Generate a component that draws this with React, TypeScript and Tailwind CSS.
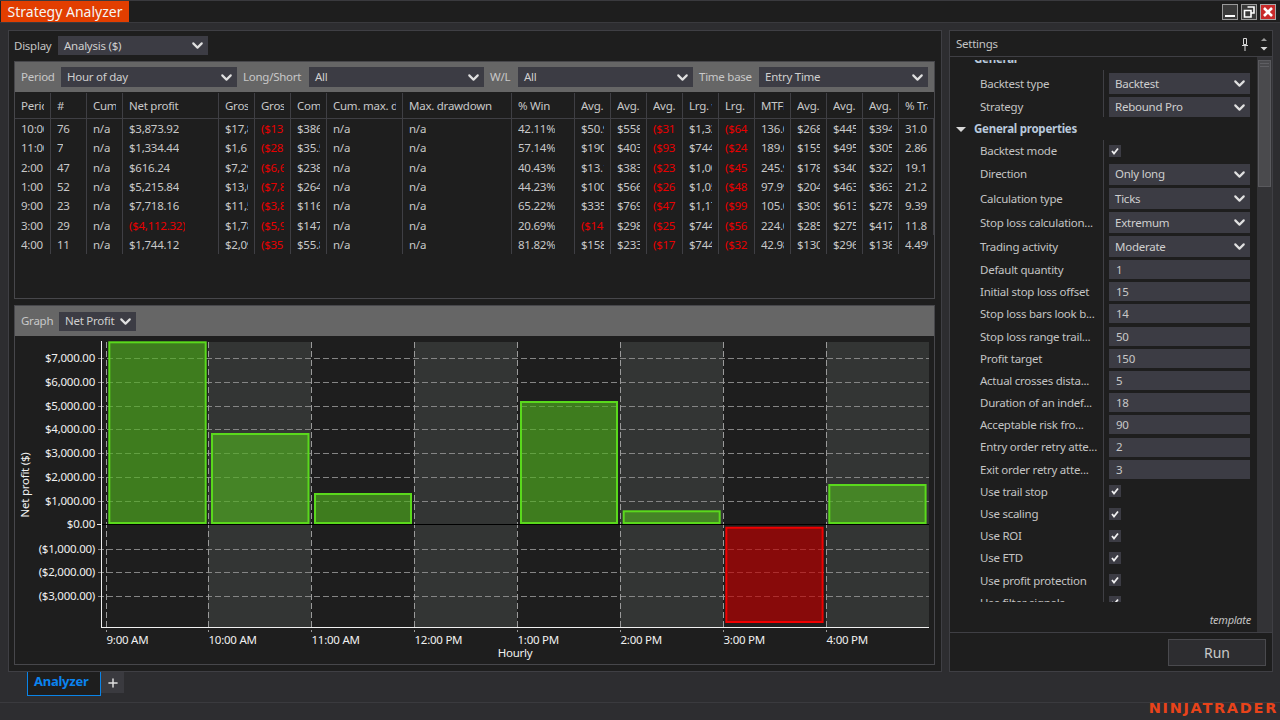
import { ChevronDown, Plus } from "lucide-react";

const FONT = "font-['Noto_Sans',sans-serif]";

const cols = [
  "Period", "#", "Cum. net profit", "Net profit", "Gross profit", "Gross loss", "Commission", "Cum. max. drawdown", "Max. drawdown", "% Win",
  "Avg. trade", "Avg. winner", "Avg. loser", "Lrg. winner", "Lrg. loser", "MTFE", "Avg. MAE", "Avg. MFE", "Avg. ETD", "% Trades",
];

const rows = [
  ["10:00 AM", "76", "n/a", "$3,873.92", "$17,816.00", "($13,942.08)", "$386.08", "n/a", "n/a", "42.11%", "$50.97", "$558.00", "($312.00)", "$1,336.00", "($644.00)", "136.00", "$268.00", "$445.00", "$394.00", "31.02%"],
  ["11:00 AM", "7", "n/a", "$1,334.44", "$1,617.00", "($283.00)", "$35.56", "n/a", "n/a", "57.14%", "$190.00", "$403.00", "($93.00)", "$744.00", "($244.00)", "189.00", "$155.00", "$495.00", "$305.00", "2.86%"],
  ["2:00 PM", "47", "n/a", "$616.24", "$7,295.00", "($6,680.00)", "$238.00", "n/a", "n/a", "40.43%", "$13.11", "$383.00", "($234.00)", "$1,006.00", "($454.00)", "245.90", "$178.00", "$340.00", "$327.00", "19.18%"],
  ["1:00 PM", "52", "n/a", "$5,215.84", "$13,010.00", "($7,820.00)", "$264.00", "n/a", "n/a", "44.23%", "$100.00", "$566.00", "($268.00)", "$1,052.00", "($484.00)", "97.99", "$204.00", "$463.00", "$363.00", "21.22%"],
  ["9:00 AM", "23", "n/a", "$7,718.16", "$11,550.00", "($3,830.00)", "$116.00", "n/a", "n/a", "65.22%", "$335.00", "$769.00", "($470.00)", "$1,170.00", "($994.00)", "105.00", "$309.00", "$613.00", "$278.00", "9.39%"],
  ["3:00 PM", "29", "n/a", "($4,112.32)", "$1,785.00", "($5,900.00)", "$147.00", "n/a", "n/a", "20.69%", "($141.00)", "$298.00", "($256.00)", "$744.00", "($566.00)", "224.00", "$285.00", "$275.00", "$417.00", "11.84%"],
  ["4:00 PM", "11", "n/a", "$1,744.12", "$2,095.00", "($350.00)", "$55.88", "n/a", "n/a", "81.82%", "$158.00", "$233.00", "($175.00)", "$744.00", "($324.00)", "42.98", "$130.00", "$296.00", "$138.00", "4.49%"],
];

const GRID = "grid grid-cols-[36px_36px_36px_96px_36px_36px_36px_76px_109px_63px_repeat(9,36px)_35px]";

function Select({ value, className = "" }: { value: string; className?: string }) {
  return (
    <div className={`flex items-center justify-between bg-[#3c3c44] pl-[6px] pr-[2px] text-[#cfcfcf] ${className}`}>
      <span className="whitespace-nowrap">{value}</span>
      <ChevronDown size={17} strokeWidth={3} className="shrink-0 text-[#e0e0e0]" />
    </div>
  );
}

function Label({ text, className = "" }: { text: string; className?: string }) {
  return <span className={`shrink-0 text-[#c4c4c4] whitespace-nowrap ${className}`}>{text}</span>;
}

function ResultsTable() {
  return (
    <div className="h-[206px]">
      <div className={`${GRID} h-[27px] border-b border-[#3f3f44] pt-[1px]`}>
        {cols.map((c, i) => (
          <div key={i} className="flex items-center border-r border-[#3f3f44] last:border-r-0">
            <span className="mx-[6px] overflow-hidden whitespace-nowrap text-[#c8c8c8]">{c}</span>
          </div>
        ))}
      </div>
      <div className={`${GRID} h-[135px] grid-rows-[repeat(7,19.3px)]`}>
        {rows.flatMap((r, ri) =>
          r.map((v, i) => (
            <div key={`${ri}-${i}`} className="flex items-center border-r border-[#3f3f44] last:border-r-0">
              <span className={`mx-[6px] overflow-hidden whitespace-nowrap ${v.startsWith("(") ? "text-[#e80000]" : "text-[#c8c8c8]"}`}>{v}</span>
            </div>
          ))
        )}
      </div>
    </div>
  );
}

function Chart() {
  const ys = [
    [358.5, "$7,000.00"], [382.5, "$6,000.00"], [406.5, "$5,000.00"], [429.5, "$4,000.00"], [453.5, "$3,000.00"], [477.5, "$2,000.00"],
    [501.5, "$1,000.00"], [549.5, "($1,000.00)"], [572.5, "($2,000.00)"], [596.5, "($3,000.00)"],
  ] as const;
  const xs = [
    [106.5, "9:00 AM"], [208.5, "10:00 AM"], [311.5, "11:00 AM"], [414.5, "12:00 PM"], [517.5, "1:00 PM"], [620.5, "2:00 PM"], [723.5, "3:00 PM"], [826.5, "4:00 PM"],
  ] as const;
  const bars = [
    [109.3, 342.3, 96.4, 180.7], [212, 434, 96.5, 89], [315, 494, 96, 29], [521, 402, 96, 121], [623.7, 511.3, 96, 11.7], [829.3, 485, 96.3, 38],
  ];
  return (
    <svg width={919} height={329} viewBox="15 336 919 329" className="block">
      {[208, 414, 620, 826].map((x) => (
        <rect key={x} x={x} y={342} width={103} height={285} fill="#333534" />
      ))}
      {ys.map(([y]) => (
        <line key={y} x1={98} x2={929} y1={y} y2={y} stroke="#858585" strokeDasharray="6 3" />
      ))}
      {xs.map(([x]) => (
        <line key={x} x1={x} x2={x} y1={342} y2={632} stroke="#9a9a9a" strokeDasharray="6 3" />
      ))}
      {bars.map(([x, y, w, h]) => (
        <rect key={x} x={x} y={y} width={w} height={h} fill="#50af1e" fillOpacity={0.65} stroke="#5ad91c" strokeWidth={2} />
      ))}
      <rect x={726.3} y={527.7} width={96.3} height={94.3} fill="#c10000" fillOpacity={0.65} stroke="#f00000" strokeWidth={2} />
      <line x1={101} x2={929} y1={524.5} y2={524.5} stroke="#000000" />
      <line x1={97} x2={101} y1={524.5} y2={524.5} stroke="#e8e8e8" />
      <line x1={101.5} x2={101.5} y1={341} y2={628} stroke="#f0f0f0" />
      <line x1={101} x2={929} y1={627.5} y2={627.5} stroke="#f0f0f0" />
      <g fontSize={11.5} fill="#f0f0f0" className={FONT}>
        {ys.map(([y, t]) => (
          <text key={t} x={95} y={y + 3.5} textAnchor="end">{t}</text>
        ))}
        <text x={95} y={528} textAnchor="end">$0.00</text>
        {xs.map(([x, t]) => (
          <text key={t} x={x} y={644}>{t}</text>
        ))}
        <text x={515} y={657} textAnchor="middle">Hourly</text>
        <text transform="translate(29 485) rotate(-90)" textAnchor="middle">Net profit ($)</text>
      </g>
    </svg>
  );
}

type Row = { label: string; kind: "select" | "input" | "check"; value?: string; h: string };

const settings: Row[] = [
  { label: "Backtest mode", kind: "check", h: "h-[22px]" },
  { label: "Direction", kind: "select", value: "Only long", h: "h-[24px]" },
  { label: "Calculation type", kind: "select", value: "Ticks", h: "h-[24.5px]" },
  { label: "Stop loss calculation...", kind: "select", value: "Extremum", h: "h-[24px]" },
  { label: "Trading activity", kind: "select", value: "Moderate", h: "h-[24px]" },
  { label: "Default quantity", kind: "input", value: "1", h: "h-[22.2px]" },
  { label: "Initial stop loss offset", kind: "input", value: "15", h: "h-[22.2px]" },
  { label: "Stop loss bars look b...", kind: "input", value: "14", h: "h-[22.2px]" },
  { label: "Stop loss range trail...", kind: "input", value: "50", h: "h-[22.2px]" },
  { label: "Profit target", kind: "input", value: "150", h: "h-[22.2px]" },
  { label: "Actual crosses dista...", kind: "input", value: "5", h: "h-[22.2px]" },
  { label: "Duration of an indef...", kind: "input", value: "18", h: "h-[22.2px]" },
  { label: "Acceptable risk fro...", kind: "input", value: "90", h: "h-[22.2px]" },
  { label: "Entry order retry atte...", kind: "input", value: "2", h: "h-[22.2px]" },
  { label: "Exit order retry atte...", kind: "input", value: "3", h: "h-[22.2px]" },
  { label: "Use trail stop", kind: "check", h: "h-[22.2px]" },
  { label: "Use scaling", kind: "check", h: "h-[22.2px]" },
  { label: "Use ROI", kind: "check", h: "h-[22.2px]" },
  { label: "Use ETD", kind: "check", h: "h-[22.2px]" },
  { label: "Use profit protection", kind: "check", h: "h-[22.2px]" },
  { label: "Use filter signals", kind: "check", h: "h-[22.2px]" },
];

function Check() {
  return (
    <div className="flex h-[12px] w-[12px] items-center justify-center bg-[#3c3c44]">
      <svg width="8" height="8" viewBox="0 0 8 8">
        <path d="M1 4 L3 6.5 L7 1.5" fill="none" stroke="#f0f0f0" strokeWidth="1.8" />
      </svg>
    </div>
  );
}

function NameCell({ text }: { text: string }) {
  return (
    <div className="flex w-[154px] shrink-0 items-center self-stretch border-r border-[#3f3f44] pl-[30px]">
      <Label text={text} />
    </div>
  );
}

function SettingRow({ row }: { row: Row }) {
  return (
    <div className={`flex items-center ${row.h}`}>
      <NameCell text={row.label} />
      <div className="ml-[5px] w-[141px]">
        {row.kind === "select" && <Select value={row.value!} className="h-[21px]" />}
        {row.kind === "input" && <div className="flex h-[19px] items-center bg-[#3c3c44] pl-[7px] text-[#c8c8c8]">{row.value}</div>}
        {row.kind === "check" && <Check />}
      </div>
    </div>
  );
}

function SettingsPanel() {
  return (
    <div className="flex h-[642px] w-[324px] shrink-0 flex-col border border-[#3f3f44] bg-[#1e1e1e]">
      <div className="flex h-[26px] shrink-0 items-center justify-between border-b border-[#3f3f44] pl-[6px]">
        <Label text="Settings" />
        <div className="flex items-center">
          <svg width="8" height="14" viewBox="0 0 8 14" className="mr-[11px]">
            <path d="M2.5 1.5 H5.5 V7.5 H2.5 Z" fill="none" stroke="#d8d8d8" />
            <path d="M1 8.5 H7 M4 9 V14" stroke="#d8d8d8" />
          </svg>
          <svg width="8" height="16" viewBox="0 0 8 16" className="mr-[4px]">
            <path d="M1 5 L4 2 L7 5 Z" fill="#9a9a9a" />
            <path d="M0.5 11 H7.5 L4 14.5 Z" fill="#d8d8d8" />
          </svg>
        </div>
      </div>
      <div className="flex min-h-0 flex-1">
        <div className="flex w-[307px] flex-col pt-[3px]">
          <div className="h-[542px] shrink-0 overflow-hidden">
            <div className="-mt-[12px]">
              <div className="flex h-[22px] items-center pl-[24px] font-bold text-[#b9c9dc]">General</div>
              <div className="flex h-[27px] items-center">
                <NameCell text="Backtest type" />
                <Select value="Backtest" className="ml-[5px] h-[21px] w-[141px]" />
              </div>
              <div className="flex h-[20px] items-center">
                <NameCell text="Strategy" />
                <Select value="Rebound Pro" className="ml-[5px] h-[20px] w-[141px]" />
              </div>
              <div className="relative flex h-[23px] items-center pl-[24px] font-bold text-[#b9c9dc]">
                <span className="absolute left-[6px] top-[10px] h-0 w-0 border-x-[5px] border-t-[5px] border-x-transparent border-t-[#d8d8d8]" />
                General properties
              </div>
              {settings.map((r) => (
                <SettingRow key={r.label} row={r} />
              ))}
            </div>
          </div>
          <div className="flex flex-1 items-start justify-end pr-[6px] pt-[10px] text-[11px] italic text-[#c4c4c4]">template</div>
        </div>
        <div className="flex h-full w-[15px] items-start justify-center bg-[#333336] pt-[3px]">
          <div className="flex h-[127px] w-[13px] justify-center border border-[#5a5a5e] bg-[#4a4a4d] pt-[2px]">
            <div className="h-[4px] w-[9px] border-y border-[#5f5f63]" />
          </div>
        </div>
      </div>
      <div className="flex h-[39px] shrink-0 items-center justify-end border-t border-[#3f3f44] pr-[6px]">
        <div className="flex h-[27px] w-[98px] items-center justify-center border border-[#4a4a4e] bg-[#2d2d30] text-[14px] tracking-normal text-[#c8c8c8]">Run</div>
      </div>
    </div>
  );
}

export default function App() {
  return (
    <div className={`flex h-[720px] w-[1280px] flex-col overflow-hidden bg-[#2d2d30] text-[11.5px] tracking-[-0.25px] ${FONT}`}>
      <div className="flex h-[23px] shrink-0 items-center justify-between border-y border-[#3a3a3e] bg-[#1e1e1e]">
        <div className="ml-[1px] flex h-[21px] w-[128px] items-center justify-center bg-[#e23e00] text-[14px] tracking-normal text-[#f5f5f5]">Strategy Analyzer</div>
        <div className="mr-[4px] flex gap-[3px]">
          <div className="flex h-[16px] w-[16px] items-end justify-center border border-[#9a9a9a] bg-[#3a3a3a] pb-[2px]">
            <div className="h-[2px] w-[10px] bg-white" />
          </div>
          <div className="flex h-[16px] w-[16px] items-center justify-center border border-[#9a9a9a] bg-[#3a3a3a]">
            <svg width="12" height="12" viewBox="0 0 12 12">
              <path d="M4.5 1 H11 V7 H8" fill="none" stroke="white" strokeWidth="1.6" />
              <path d="M1.5 4.5 H8 V11 H1.5 Z" fill="none" stroke="white" strokeWidth="1.6" />
            </svg>
          </div>
          <div className="flex h-[16px] w-[16px] items-center justify-center border border-[#a8a8a8] bg-[#c82a2a]">
            <svg width="12" height="12" viewBox="0 0 12 12">
              <path d="M2 2 L10 10 M10 2 L2 10" stroke="white" strokeWidth="2.6" />
            </svg>
          </div>
        </div>
      </div>

      <div className="flex h-[649px] shrink-0 gap-[7px] pl-[8px] pt-[7px]">
        <div className="flex h-[642px] w-[934px] shrink-0 flex-col border border-[#3f3f44] bg-[#1e1e1e] px-[5px]">
          <div className="flex h-[30px] shrink-0 items-start gap-[6px] pt-[5px]">
            <Label text="Display" className="w-[38px] leading-[19px]" />
            <Select value="Analysis ($)" className="h-[19px] w-[150px]" />
          </div>
          <div className="h-[238px] w-[921px] shrink-0 border border-[#47474b]">
            <div className="flex h-[30px] items-center gap-[6px] bg-[#666666] pl-[6px]">
              <Label text="Period" className="w-[34px] !text-[#c8c8c8]" />
              <Select value="Hour of day" className="h-[20px] w-[176px]" />
              <Label text="Long/Short" className="w-[60px] !text-[#c8c8c8]" />
              <Select value="All" className="h-[20px] w-[175px]" />
              <Label text="W/L" className="w-[22px] !text-[#c8c8c8]" />
              <Select value="All" className="h-[20px] w-[175px]" />
              <Label text="Time base" className="w-[54px] !text-[#c8c8c8]" />
              <Select value="Entry Time" className="h-[20px] w-[169px]" />
            </div>
            <ResultsTable />
          </div>
          <div className="mt-[6px] h-[360px] w-[921px] shrink-0 border border-[#47474b]">
            <div className="flex h-[30px] items-center gap-[6px] bg-[#666666] pl-[6px]">
              <Label text="Graph" className="w-[32px] !text-[#c8c8c8]" />
              <Select value="Net Profit" className="h-[19px] w-[77px]" />
            </div>
            <Chart />
          </div>
        </div>
        <SettingsPanel />
      </div>

      <div className="flex h-[31px] shrink-0 items-start border-b border-[#3a3a3e] pl-[27px]">
        <div className="flex h-[24px] w-[74px] items-center border-x border-b border-[#0a84e8] bg-[#1e1e1e] pb-[4px] pl-[6px] text-[13px] font-bold text-[#0a84f0]">Analyzer</div>
        <div className="flex h-[21px] w-[23px] items-center justify-center bg-[#3a3a3f] text-[#e0e0e0]">
          <Plus size={14} strokeWidth={2.5} />
        </div>
      </div>
      <div className="flex flex-1 items-start justify-end pr-[2px]">
        <span className="font-['DejaVu_Sans',sans-serif] text-[14.5px] font-bold leading-[11px] tracking-[1.7px] text-[#e8431a]">NINJATRADER</span>
      </div>
    </div>
  );
}
